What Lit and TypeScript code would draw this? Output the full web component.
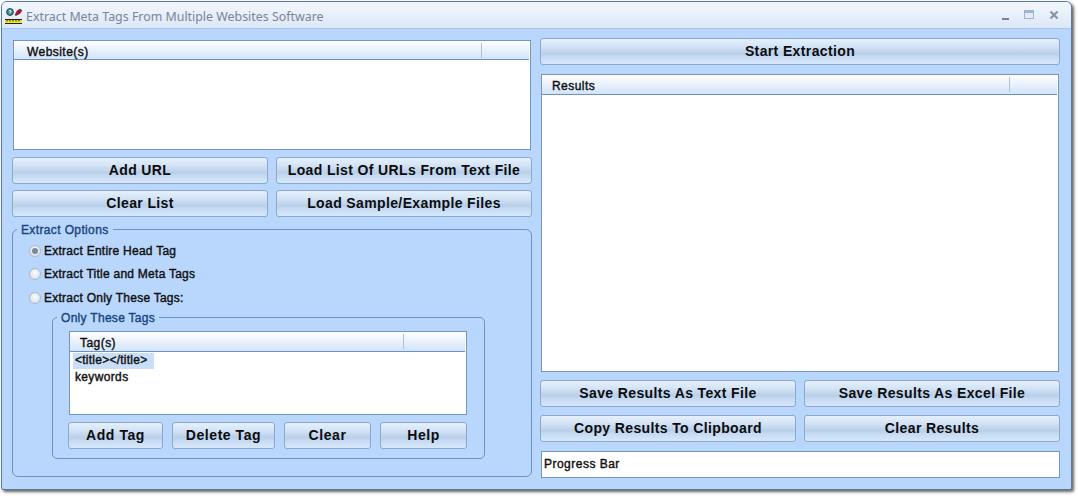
import { LitElement, html, css } from "lit";
import { customElement } from "lit/decorators.js";

@customElement("app-list")
class AppList extends LitElement {
  static properties = { label: {}, col: { type: Number }, pad: { type: Number }, hh: { type: Number } };
  label = "";
  col = 100;
  pad = 12;
  hh = 19;
  static styles = css`
    :host { display: flex; flex-direction: column; background: #fff; border: 1px solid #7397be; box-sizing: border-box; overflow: hidden; }
    .head { box-sizing: border-box; flex: none; display: flex; background: linear-gradient(#ffffff, #d3e4f9); border-bottom: 1px solid #6b93bd; margin-right: 1px; }
    .name { box-sizing: border-box; font: 12px/14px "Liberation Sans", sans-serif; color: #101010; -webkit-text-stroke: 0.4px #101010; letter-spacing: 0.45px; border-right: 1px solid #a9c3df; height: 15px; align-self: flex-start; margin-top: 2px; padding-top: 2px; }
    .body { flex: 1; padding: 1px 3px; }
  `;
  render() {
    return html`<div class="head" style="height:${this.hh}px"><div class="name" style="width:${this.col}px;padding-left:${this.pad}px">${this.label}</div></div><div class="body"><slot></slot></div>`;
  }
}

@customElement("app-root")
class AppRoot extends LitElement {
  static styles = css`
    :host { display: block; width: 1078px; height: 496px; background: #fff; overflow: hidden; font-family: "Liberation Sans", sans-serif; }
    .window { box-sizing: border-box; width: 1071px; height: 489px; margin: 1px 0 0 1px; display: flex; flex-direction: column; border: 1px solid #5a7899; border-radius: 6px 6px 2px 2px; box-shadow: 2px 2px 3px #666; background: #b9d7fc; overflow: hidden; }
    .title { height: 27px; flex: none; box-sizing: border-box; display: flex; align-items: center; padding: 3px 11px 0 3px; background: linear-gradient(#f3f7fc, #dbe8f7); border-bottom: 1px solid #a9c6e8; }
    .title svg.app { flex: none; }
    .title span { margin-left: 3px; font: 12.4px "Noto Sans", sans-serif; color: #7b8594; }
    .ctrls { margin-left: auto; display: flex; align-items: center; gap: 14px; margin-top: -3px; }
    .client { flex: 1; display: grid; grid-template-columns: 520px 520px; gap: 8px; padding: 9px 10px 0; align-content: start; }
    .col { display: flex; flex-direction: column; }
    .left { padding-top: 2px; }
    button { box-sizing: border-box; height: 27px; padding: 0 0 2px; border: 1px solid #8ca9ca; border-radius: 3px; background: linear-gradient(#e6f0fc 0%, #d3e3f6 30%, #b9cfe9 58%, #c4d9f2 70%, #d8e8fb 100%); font: bold 14px "Liberation Sans", sans-serif; letter-spacing: 0.37px; color: #0c0c0c; text-align: center; }
    .row { display: grid; grid-template-columns: 256px 256px; gap: 8px; }
    .l1 { margin: 0 1px; height: 110px; }
    .r1 { margin: 9px 1px 8px; height: 298px; }
    .progress { margin: 9px 0 0 1px; height: 27px; background: #fff; border: 1px solid #7397be; box-sizing: border-box; font: 12px/25px "Liberation Sans", sans-serif; color: #101010; -webkit-text-stroke: 0.4px #101010; padding-left: 2px; letter-spacing: 0.48px; }
    fieldset { margin: 0; box-sizing: border-box; border: 1px solid #6d92bb; border-radius: 6px; min-width: 0; }
    legend { padding: 2px 4px 0; font: 12px/12px "Liberation Sans", sans-serif; color: #1b4580; -webkit-text-stroke: 0.4px #1b4580; }
    .outer { height: 255px; margin-top: 5px; padding: 0 0 0 39px; }
    .outer > legend { margin-left: -35px; letter-spacing: 0.37px; }
    .radios { display: flex; flex-direction: column; margin: 6.5px 0 0 -23px; }
    .radio { height: 16px; margin-bottom: 7.5px; display: flex; align-items: center; gap: 3px; font: 12px "Liberation Sans", sans-serif; color: #101010; -webkit-text-stroke: 0.4px #101010; letter-spacing: 0.25px; }
    .dot { width: 12px; height: 12px; box-sizing: border-box; border-radius: 50%; border: 1px solid #a9b8c9; background: radial-gradient(circle at 50% 40%, #fbfcfd, #d2d9e1); display: flex; align-items: center; justify-content: center; }
    .dot.on i { display: block; width: 6px; height: 6px; border-radius: 50%; background: #7d8996; }
    .inner { width: 433px; height: 149px; margin-top: -3px; padding: 0 0 0 15px; border-radius: 5px; }
    .inner > legend { margin-left: -11px; letter-spacing: 0.3px; }
    .tags { width: 398px; height: 84px; margin: 7px 0 7px 1px; }
    .item { height: 16px; font: 12px/15px "Liberation Sans", sans-serif; color: #101010; -webkit-text-stroke: 0.4px #101010; letter-spacing: 0.35px; padding-left: 2px; width: fit-content; }
    .item.sel { background: #c9def9; width: 77px; padding-right: 2px; letter-spacing: 0.25px; }
    .item.sel + .item { margin-top: 1px; }
    .btns { display: grid; grid-template-columns: 95px 103px 87px 87px; gap: 9px; }
    .btns button { letter-spacing: 0.55px; }
  `;
  render() {
    return html`
      <div class="window">
        <div class="title">
          <svg class="app" width="18" height="18" viewBox="0 0 18 18">
            <circle cx="5" cy="4" r="3.4" fill="#3f8f99" stroke="#1d4a58"/>
            <path d="M3.8 3 q1.2-1.4 2.4 0 q0 1-1.2 1.6 v.8" fill="none" stroke="#dff" stroke-width="1"/>
            <path d="M10 7 l2-4 3-2 2 1.5-2 3-4 2z" fill="#a3182f" stroke="#5a0d1b" stroke-width=".5"/>
            <rect x="0" y="11" width="17" height="5" fill="#f6e822"/>
            <path d="M0 11.5h17M0 15.5h17" stroke="#222"/>
            <path d="M2 11.5v2M5 11.5v2M8 11.5v2M11 11.5v2M14 11.5v2" stroke="#222"/>
          </svg>
          <span>Extract Meta Tags From Multiple Websites Software</span>
          <div class="ctrls">
            <svg width="9" height="11" viewBox="0 0 9 11"><rect x="1" y="8" width="7" height="2" fill="#6f869c"/></svg>
            <svg width="11" height="10" viewBox="0 0 11 10"><rect x=".5" y=".5" width="9" height="8" fill="#e3ecf6" stroke="#a3b5c9"/><rect x="1" y="1" width="8" height="2" fill="#a3b5c9"/></svg>
            <svg width="11" height="11" viewBox="0 0 11 11"><path d="M1.5 1.5l7 7M8.5 1.5l-7 7" stroke="#8295a8" stroke-width="2.2"/></svg>
          </div>
        </div>
        <div class="client">
          <div class="col left">
            <app-list class="l1" label="Website(s)" .col=${468} .pad=${13}></app-list>
            <div class="row" style="margin-top:7px"><button>Add URL</button><button>Load List Of URLs From Text File</button></div>
            <div class="row" style="margin-top:6px"><button>Clear List</button><button>Load Sample/Example Files</button></div>
            <fieldset class="outer">
              <legend>Extract Options</legend>
              <div class="radios">
                <div class="radio"><span class="dot on"><i></i></span>Extract Entire Head Tag</div>
                <div class="radio"><span class="dot"></span>Extract Title and Meta Tags</div>
                <div class="radio"><span class="dot"></span>Extract Only These Tags:</div>
              </div>
              <fieldset class="inner">
                <legend>Only These Tags</legend>
                <app-list class="tags" label="Tag(s)" .col=${334} .pad=${10} .hh=${20}>
                  <div class="item sel">&lt;title&gt;&lt;/title&gt;</div>
                  <div class="item">keywords</div>
                </app-list>
                <div class="btns"><button>Add Tag</button><button>Delete Tag</button><button>Clear</button><button>Help</button></div>
              </fieldset>
            </fieldset>
          </div>
          <div class="col">
            <button>Start Extraction</button>
            <app-list class="r1" label="Results" .col=${468} .pad=${10} .hh=${20}></app-list>
            <div class="row"><button>Save Results As Text File</button><button>Save Results As Excel File</button></div>
            <div class="row" style="margin-top:8px"><button>Copy Results To Clipboard</button><button>Clear Results</button></div>
            <div class="progress">Progress Bar</div>
          </div>
        </div>
      </div>
    `;
  }
}
